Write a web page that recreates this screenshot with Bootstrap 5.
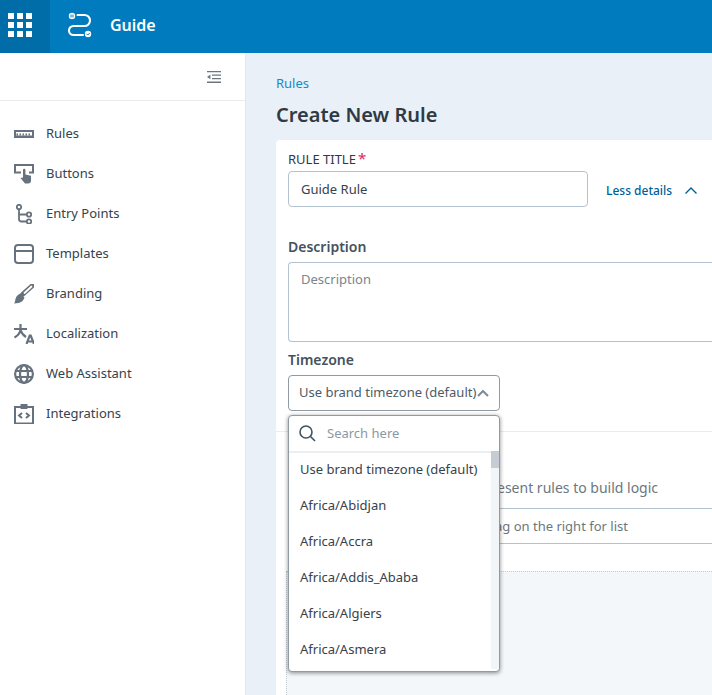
<!DOCTYPE html>
<html lang="en">
<head>
<meta charset="utf-8">
<title>Guide</title>
<link href="https://cdn.jsdelivr.net/npm/bootstrap@5.3.0/dist/css/bootstrap.min.css" rel="stylesheet">
<style>
html,body{height:100%;overflow:hidden}
body{font-family:"Noto Sans","Liberation Sans",sans-serif;font-size:13px;color:#36424c;background:#e9f0f7}
.topbar{height:53px;background:#007bbd;color:#fff}
.waffle{width:50px;background:#006da8;padding:0 0 3px 8px}
.waffle-grid{display:grid;grid-template-columns:repeat(3,6px);gap:3px}
.waffle-grid i{height:6px;background:#fff;display:block}
.brandwrap{margin-left:18px;padding-bottom:3px}
.brandname{font-size:16px;font-weight:600;margin-left:16px}
.shell{height:642px}
.sidenav{width:246px;background:#fff;border-right:1px solid #e3e8ec}
.sidehead{height:48px;border-bottom:1px solid #e9ecef;padding-right:24px}
.navlist{padding-top:13px}
.navrow{height:40px;padding-left:14px;color:#36424c;text-decoration:none}
.navrow svg{width:20px;height:20px;margin-right:12px;flex:none}
.mainpane{padding:0 0 0 30px;min-width:0;overflow:hidden}
.crumb{font-size:13px;color:#1b87c9;text-decoration:none;margin-top:21px;line-height:18px}
.pagetitle{font-size:20px;font-weight:600;line-height:27px;margin:9px 0 12px;color:#2f3a42}
.formcard{background:#fff;border-radius:4px 0 0 0;position:relative;height:555px;padding:0 0 0 12px;overflow:hidden}
.lab{font-size:13px;line-height:18px;color:#2f3a42;padding-top:10px}
.req{color:#e0245e;font-size:15px;line-height:15px;margin-left:2px}
.inputrow{margin-top:3px}
.titleinput{width:300px;height:36px;border:1px solid #b3c2d0;border-radius:4px;padding:1px 12px 0;font-size:13px;color:#36424c}
.less{color:#005f99;font-size:12px;font-weight:500;margin-left:18px;padding-top:3px}
.less svg{margin-left:13px}
.secthead{font-size:14px;font-weight:600;color:#44525d;line-height:19px}
.sectfirst{margin-top:30px}
.desc{height:80px;border:1px solid #b3c2d0;border-radius:4px 0 0 4px;border-right:0;padding:7px 12px;color:#7a858e;font-size:13px;margin:6px 0 8px}
.tzbtn{width:212px;height:36px;border:1px solid #8f9aa3;border-radius:4px;padding:0 10px;margin-top:6px;font-size:13px;color:#4d5b66;white-space:nowrap}
.tzbtn svg{margin-left:1px;flex:none}
.rulesdivider{border-top:1px solid #e9edf0;margin-left:-12px;margin-top:20px;height:47px}
.logictext{padding-left:209px;color:#6b7780;font-size:14px;line-height:20px}
.logicinput{border:solid #b3c2d0;border-width:1px 0;height:36px;margin-top:10px;padding-left:207px;line-height:34px;color:#6b7780;font-size:13px}
.canvasarea{position:absolute;left:10px;right:0;top:431px;bottom:0;background:#f3f7fa;border-left:1px dotted #c4ccd3;border-top:1px dotted #c4ccd3}
.tzmenu{position:absolute;left:12px;top:275px;width:212px;height:257px;background:#fff;border:1px solid #8f9aa3;border-radius:4px;box-shadow:0 1px 4px rgba(0,0,0,.45);overflow:hidden;z-index:3}
.tzsearch{height:37px;border-bottom:2px solid #eceff1;padding-left:10px;color:#8a98a4;font-size:13px}
.tzsearch svg{margin-right:11px}
.tzlist{position:relative;height:218px}
.tzoption{height:36px;line-height:36px;padding-left:11px;font-size:13px;color:#36424c}
.tzoption:first-child{margin-top:-2px}
.track{position:absolute;right:0;top:0;bottom:0;width:8px;background:#f1f5f8}
.thumb{height:17px;background:#c5ccd3}
</style>
</head>
<body>
<header class="topbar d-flex align-items-stretch">
  <div class="waffle d-flex align-items-center justify-content-start">
    <div class="waffle-grid"><i></i><i></i><i></i><i></i><i></i><i></i><i></i><i></i><i></i></div>
  </div>
  <div class="brandwrap d-flex align-items-center">
    <svg width="26" height="26" viewBox="0 0 26 26" fill="none" stroke="#fff" stroke-width="2.100" stroke-linecap="round">
      <path d="M9.500 3h7a5.500 5.500 0 0 1 0 11H5.500a4.500 4.500 0 0 0 0 9H15"/>
      <circle cx="4" cy="4" r="3.200" fill="#fff" stroke="none"/>
      <path d="M3 3v2M5 3v2" stroke="#007bbd" stroke-width="1"/>
      <circle cx="20" cy="22" r="3.200" fill="#fff" stroke="none"/>
      <path d="M18.700 22l1 1 1.800-1.800" stroke="#007bbd" stroke-width="1"/>
    </svg>
    <span class="brandname">Guide</span>
  </div>
</header>
<div class="shell d-flex">
  <nav class="sidenav flex-shrink-0">
    <div class="sidehead d-flex align-items-center justify-content-end">
      <svg width="14" height="12" viewBox="0 0 14 12" fill="#6b7780"><path d="M0 0h14v1.300H0zM5 3.400h9v1.300H5zM5 7h9v1.300H5zM0 10.600h14V12H0zM3.400 3.400v4.900L0 5.900z"/></svg>
    </div>
    <div class="navlist">
      <a class="navrow d-flex align-items-center" href="#"><svg viewBox="0 0 20 20" fill="none"><path d="M0 6h20v8H0z" fill="#66727d"/><path d="M2 8h16v3.500H2z" fill="#fff"/><path d="M2.500 10.500h15" stroke="#66727d" stroke-width="2" stroke-dasharray="1.500 1.500"/></svg>Rules</a>
      <a class="navrow d-flex align-items-center" href="#"><svg viewBox="0 0 20 20" fill="#66727d"><path d="M0 0h20v9.500h-5v-2h3V2H2v5.500h5v2H0z"/><path d="M9 6a1.200 1.200 0 0 1 2.400 0v4.500l5.600 1.200V16.500a3 3 0 0 1-3 3H11L6.500 14l2.500-.5z"/></svg>Buttons</a>
      <a class="navrow d-flex align-items-center" href="#"><svg viewBox="0 0 20 20" fill="none" stroke="#66727d" stroke-width="1.800"><circle cx="5" cy="3" r="2.200"/><circle cx="15" cy="10.500" r="2.200"/><circle cx="15" cy="17.500" r="2.200"/><path d="M5 5.200V15a2.500 2.500 0 0 0 2.500 2.500h5.300M5 10.500h7.800"/></svg>Entry Points</a>
      <a class="navrow d-flex align-items-center" href="#"><svg viewBox="0 0 20 20" fill="none" stroke="#66727d" stroke-width="2"><rect x="1" y="1" width="18" height="18" rx="3"/><path d="M1 7h18"/></svg>Templates</a>
      <a class="navrow d-flex align-items-center" href="#"><svg viewBox="0 0 20 20" fill="none"><path d="M9 10L18 2" stroke="#66727d" stroke-width="5" stroke-linecap="round"/><path d="M10.500 9l7-6.500" stroke="#fff" stroke-width="1.800" stroke-linecap="round"/><path d="M6.500 9.500l4 4c-1 3-3 5-6 5.500L0 19.500c1.500-1.500 1-4 2-6s3-3.500 4.500-4z" fill="#66727d"/></svg>Branding</a>
      <a class="navrow d-flex align-items-center" href="#"><svg viewBox="0 0 20 20" fill="none" stroke="#66727d" stroke-width="2.200"><path d="M0 5h13M6.500 0v5c0 3.500-2.500 6.500-6 8.500M6.500 6c1 3 3 5.500 5.500 7"/><path d="M12.500 20l3.200-8.500h1L20 20M14 17.500h4.500"/></svg>Localization</a>
      <a class="navrow d-flex align-items-center" href="#"><svg viewBox="0 0 20 20" fill="none" stroke="#66727d" stroke-width="2.200"><circle cx="10" cy="10" r="8.900"/><ellipse cx="10" cy="10" rx="4" ry="8.900"/><path d="M1 7h18M1 13h18"/></svg>Web Assistant</a>
      <a class="navrow d-flex align-items-center" href="#"><svg viewBox="0 0 20 20" fill="none" stroke="#66727d" stroke-width="2"><path d="M7 3H1v16.500h18V3h-6"/><path d="M6.500 0h7v5h-7z" fill="#66727d" stroke="none"/><path d="M8 9l-3 2.500L8 14M12 9l3 2.500L12 14"/></svg>Integrations</a>
    </div>
  </nav>
  <main class="mainpane flex-grow-1 d-flex flex-column">
    <a class="crumb" href="#">Rules</a>
    <h1 class="pagetitle">Create New Rule</h1>
    <div class="formcard">
      <div class="lab">RULE TITLE<span class="req">*</span></div>
      <div class="inputrow d-flex align-items-center">
        <div class="titleinput d-flex align-items-center">Guide Rule</div>
        <div class="less d-flex align-items-center">Less details
          <svg width="12" height="7" viewBox="0 0 12 7" fill="none" stroke="#005f99" stroke-width="1.400"><path d="M.5 6.500L6 1l5.500 5.500"/></svg>
        </div>
      </div>
      <div class="secthead sectfirst">Description</div>
      <div class="desc">Description</div>
      <div class="secthead">Timezone</div>
      <div class="tzbtn d-flex align-items-center">Use brand timezone (default)
        <svg width="12" height="7" viewBox="0 0 12 7" fill="none" stroke="#7d8a95" stroke-width="2"><path d="M1 6l5-5 5 5"/></svg>
      </div>
      <div class="rulesdivider"></div>
      <div class="logictext">esent rules to build logic</div>
      <div class="logicinput">ag on the right for list</div>
      <div class="canvasarea"></div>
      <div class="tzmenu">
        <div class="tzsearch d-flex align-items-center">
          <svg width="17" height="17" viewBox="0 0 17 17" fill="none" stroke="#3f5461" stroke-width="1.600"><circle cx="7" cy="7" r="6"/><path d="M11.500 11.500L16 16"/></svg>
          Search here
        </div>
        <div class="tzlist">
          <div class="tzoption">Use brand timezone (default)</div>
          <div class="tzoption">Africa/Abidjan</div>
          <div class="tzoption">Africa/Accra</div>
          <div class="tzoption">Africa/Addis_Ababa</div>
          <div class="tzoption">Africa/Algiers</div>
          <div class="tzoption">Africa/Asmera</div>
          <div class="track"><div class="thumb"></div></div>
        </div>
      </div>
    </div>
  </main>
</div>
<script src="https://cdn.jsdelivr.net/npm/bootstrap@5.3.0/dist/js/bootstrap.bundle.min.js"></script>
</body>
</html>
